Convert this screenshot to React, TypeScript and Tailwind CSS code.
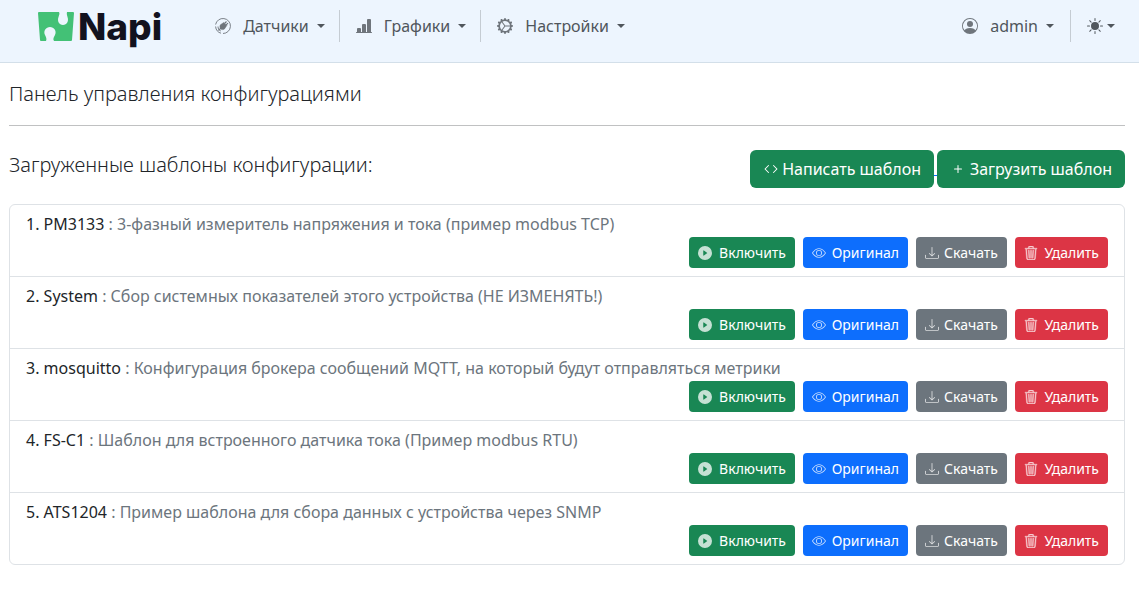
import type { ReactNode } from "react";
import { BsBarChartLineFill, BsCode, BsDownload, BsEye, BsGearWideConnected, BsPersonCircle, BsPlayCircleFill, BsPlus, BsSunFill, BsTrash3 } from "react-icons/bs";

const templates = [
  { name: "PM3133", text: "3-фазный измеритель напряжения и тока (пример modbus TCP)" },
  { name: "System", text: "Сбор системных показателей этого устройства (НЕ ИЗМЕНЯТЬ!)" },
  { name: "mosquitto", text: "Конфигурация брокера сообщений MQTT, на который будут отправляться метрики" },
  { name: "FS-C1", text: "Шаблон для встроенного датчика тока (Пример modbus RTU)" },
  { name: "ATS1204", text: "Пример шаблона для сбора данных с устройства через SNMP" },
];

function Caret() {
  return <span className="border-x-4 border-t-4 border-x-transparent border-t-current" />;
}

function SensorIcon() {
  return (
    <svg viewBox="0 0 16 16" className="size-4" fill="none" stroke="currentColor" aria-hidden="true">
      <path d="M.6 6.500A7.500 7.500 0 1 1 8 15.500M.6 8.500C.8 12 3 14.500 6 15.200M3 8.500c0 2 1 3.800 2.800 4.500" strokeWidth=".9" />
      <path d="M3.500 12.500 6 10M9.500 5.500l2-2M11 7l2-1.800" strokeWidth="1.100" />
      <path d="M5.400 6.800 8.800 4.500l3 3-2.300 3.400c-1.300 1-2.700.9-3.700 0s-1.200-2.700-.4-4.100Z" fill="currentColor" stroke="currentColor" strokeWidth=".5" />
    </svg>
  );
}

function MenuButton({ icon, label }: { icon: ReactNode; label: string }) {
  return (
    <button type="button" className="flex h-8 items-center gap-2">
      <span className="mr-1 opacity-80">{icon}</span>
      {label}
      <Caret />
    </button>
  );
}

function Logo() {
  return (
    <a href="#" className="flex items-center gap-1 text-[#12121f]" aria-label="Napi">
      <svg viewBox="0 0 36 30" className="h-[30px] w-9" aria-hidden="true">
        <path fill="#43c176" d="M1 0H21C22 2 21 3 20.500 5C19 9 21 13 25 13C29 13 31 9 29.500 5C29 3 28.500 2 29 0H35Q36 0 36 1L34 28Q34 29 33 29H16C14.500 27 16 25 17 23C19 19 16 15 12 15C8 15 5 19 7 23C8 25 9 27 8 29H3Q2 29 2 28L0 1Q0 0 1 0Z" />
      </svg>
      <span className="font-['Inter'] text-[37px] leading-[46px] font-extrabold">Napi</span>
    </a>
  );
}

function Action({ icon, label, color }: { icon: ReactNode; label: string; color: string }) {
  return (
    <button type="button" className={`flex h-[31px] items-center justify-between rounded px-[9px] text-sm text-white ${color}`}>
      <span className="opacity-75">{icon}</span>
      {label}
    </button>
  );
}

export default function App() {
  return (
    <div className="min-h-screen bg-white font-['Noto_Sans',sans-serif] text-base text-[#212529]">
      <header className="flex h-[63px] items-start justify-between border-b border-[#d3dfe9] bg-[#edf5fe] pr-6 pl-[38px] text-[#50565c]">
        <div className="flex items-start">
          <div className="pt-1"><Logo /></div>
          <nav className="ml-[53px] flex pt-[10px]">
            <div className="pr-[14px]"><MenuButton icon={<SensorIcon />} label="Датчики" /></div>
            <div className="border-l border-[#c5ccd3] pr-[14px] pl-4"><MenuButton icon={<BsBarChartLineFill />} label="Графики" /></div>
            <div className="border-l border-[#c5ccd3] pl-4"><MenuButton icon={<BsGearWideConnected />} label="Настройки" /></div>
          </nav>
        </div>
        <div className="flex pt-[10px]">
          <div className="pr-4"><MenuButton icon={<BsPersonCircle />} label="admin" /></div>
          <button type="button" aria-label="Тема" className="flex h-8 items-center gap-1 border-l border-[#c5ccd3] pl-4">
            <BsSunFill />
            <Caret />
          </button>
        </div>
      </header>
      <main className="pr-[14px] pl-[9px]">
        <h1 className="border-b border-[#c0c1c2] pt-[19px] pb-[19px] text-xl leading-6 font-light">Панель управления конфигурациями</h1>
        <div className="flex items-start justify-between pt-6">
          <h2 className="pt-[3px] text-xl leading-6 font-light">Загруженные шаблоны конфигурации:</h2>
          <div className="flex text-white">
            <button type="button" className="flex h-[38px] w-[184px] items-center justify-between rounded-md bg-[#198754] px-[13px]"><BsCode />Написать шаблон</button>
            <span className="h-[26px] w-[3px] border-b border-[#0d6efd]" />
            <button type="button" className="flex h-[38px] w-[188px] items-center justify-between rounded-md bg-[#198754] px-[13px]"><BsPlus />Загрузить шаблон</button>
          </div>
        </div>
        <ol className="mt-4 divide-y divide-[#dee2e6] rounded-md border border-[#dee2e6]">
          {templates.map((t, i) => (
            <li key={t.name} className="px-4 pt-[7px] pb-2">
              <p className="mb-px">{i + 1}. {t.name} <span className="text-[#6c757d]">: {t.text}</span></p>
              <div className="flex justify-end gap-2">
                <Action icon={<BsPlayCircleFill />} label="Включить" color="w-[106px] bg-[#198754]" />
                <Action icon={<BsEye />} label="Оригинал" color="w-[105px] bg-[#0d6efd]" />
                <Action icon={<BsDownload />} label="Скачать" color="w-[91px] bg-[#6c757d]" />
                <Action icon={<BsTrash3 stroke="currentColor" strokeWidth={0.5} />} label="Удалить" color="w-[93px] bg-[#dc3545]" />
              </div>
            </li>
          ))}
        </ol>
      </main>
    </div>
  );
}
